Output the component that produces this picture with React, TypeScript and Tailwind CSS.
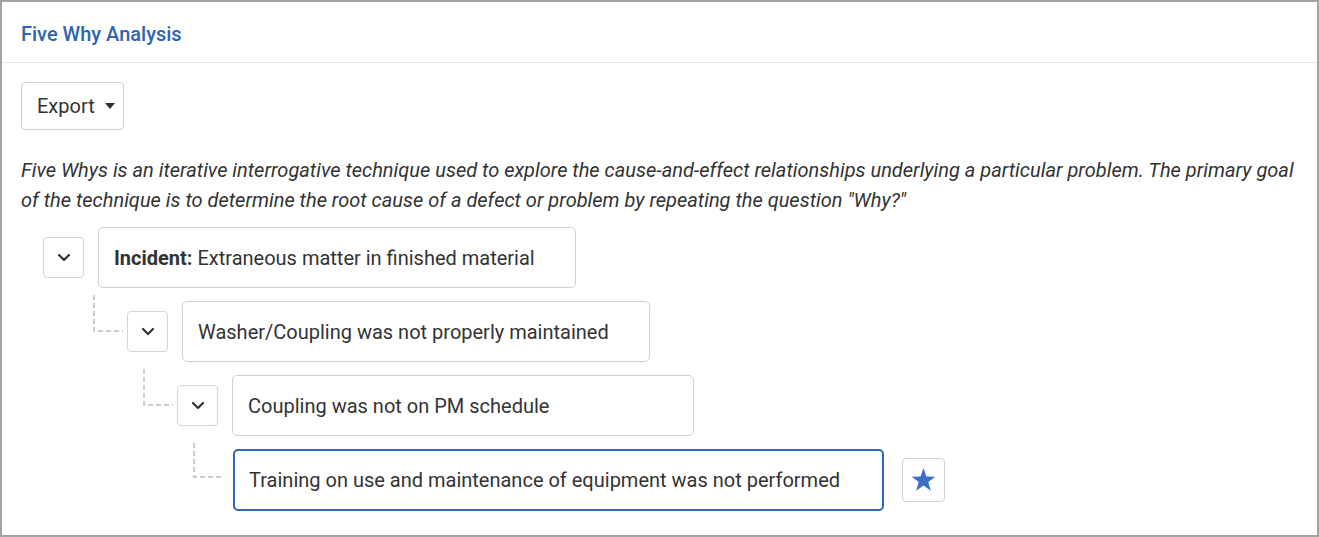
const Chevron = () => (
  <svg width="14" height="9" viewBox="0 0 14 9" fill="none">
    <path d="M2 2l5 5 5-5" stroke="#333" strokeWidth="2.2" strokeLinecap="round" strokeLinejoin="round" />
  </svg>
);

const StarIcon = () => (
  <svg width="25" height="24" viewBox="0 0 24 23">
    <path
      d="M12 0 L14.82 8.12 L23.41 8.29 L16.57 13.48 L19.05 21.71 L12 16.8 L4.95 21.71 L7.43 13.48 L0.59 8.29 L9.18 8.12 Z"
      fill="#3a6fc4"
    />
  </svg>
);

const Connector = ({ w, h }: { w: number; h: number }) => (
  <svg width={w} height={h} className="shrink-0 self-start -mt-[6px]">
    <path d={`M1 0 V${h - 1} H${w}`} stroke="#bdbdbd" strokeWidth="1.5" strokeDasharray="5 3" fill="none" />
  </svg>
);

const ToggleBtn = () => (
  <button className="w-[41px] h-[41px] shrink-0 flex items-center justify-center border border-[#d6d6d6] rounded-[4px] bg-white">
    <Chevron />
  </button>
);

export default function App() {
  return (
    <div className="w-[1319px] h-[537px] bg-white border-2 border-[#a3a3a3] text-[#333] font-['Roboto',sans-serif] overflow-hidden">
      <div className="h-[61px] border-b border-[#e6e6e6] flex items-center pl-[19px]">
        <h1 className="text-[20px] font-medium text-[#2d64b0] pt-[3px]">Five Why Analysis</h1>
      </div>

      <div className="pl-[19px] pr-[4px] pt-[19px]">
        <button className="h-[48px] pl-[15px] pr-[8px] flex items-center gap-[10px] border border-[#cfcfcf] rounded-[4px] text-[20px] text-[#333]">
          Export
          <svg width="10" height="6" viewBox="0 0 10 6">
            <path d="M0 0h10L5 6z" fill="#333" />
          </svg>
        </button>

        <p className="mt-[25px] text-[20px] leading-[30px] italic">
          Five Whys is an iterative interrogative technique used to explore the cause-and-effect relationships underlying a particular problem. The primary goal of the technique is to determine the root cause of a defect or problem by repeating the question "Why?"
        </p>

        <div className="mt-[12px] flex flex-col gap-[13px] text-[20px]">
          <div className="flex items-center ml-[22px] gap-[14px]">
            <ToggleBtn />
            <div className="w-[478px] h-[61px] flex items-center px-[15px] border border-[#d0d0d0] rounded-[5px]">
              <span><b className="font-bold">Incident:</b> Extraneous matter in finished material</span>
            </div>
          </div>

          <div className="flex items-center ml-[72px]">
            <Connector w={30} h={37} />
            <div className="ml-[4px]"><ToggleBtn /></div>
            <div className="ml-[14px] w-[468px] h-[61px] flex items-center px-[15px] border border-[#d0d0d0] rounded-[5px]">
              Washer/Coupling was not properly maintained
            </div>
          </div>

          <div className="flex items-center ml-[122px]">
            <Connector w={30} h={37} />
            <div className="ml-[4px]"><ToggleBtn /></div>
            <div className="ml-[14px] w-[462px] h-[61px] flex items-center px-[15px] border border-[#d0d0d0] rounded-[5px]">
              Coupling was not on PM schedule
            </div>
          </div>

          <div className="flex items-center ml-[172px]">
            <Connector w={28} h={35} />
            <div className="ml-[12px] w-[651px] h-[62px] flex items-center px-[14px] border-2 border-[#2f66b6] rounded-[5px]">
              Training on use and maintenance of equipment was not performed
            </div>
            <button className="ml-[18px] w-[43px] h-[44px] flex items-center justify-center border border-[#d0d0d0] rounded-[4px] bg-white">
              <StarIcon />
            </button>
          </div>
        </div>
      </div>
    </div>
  );
}
